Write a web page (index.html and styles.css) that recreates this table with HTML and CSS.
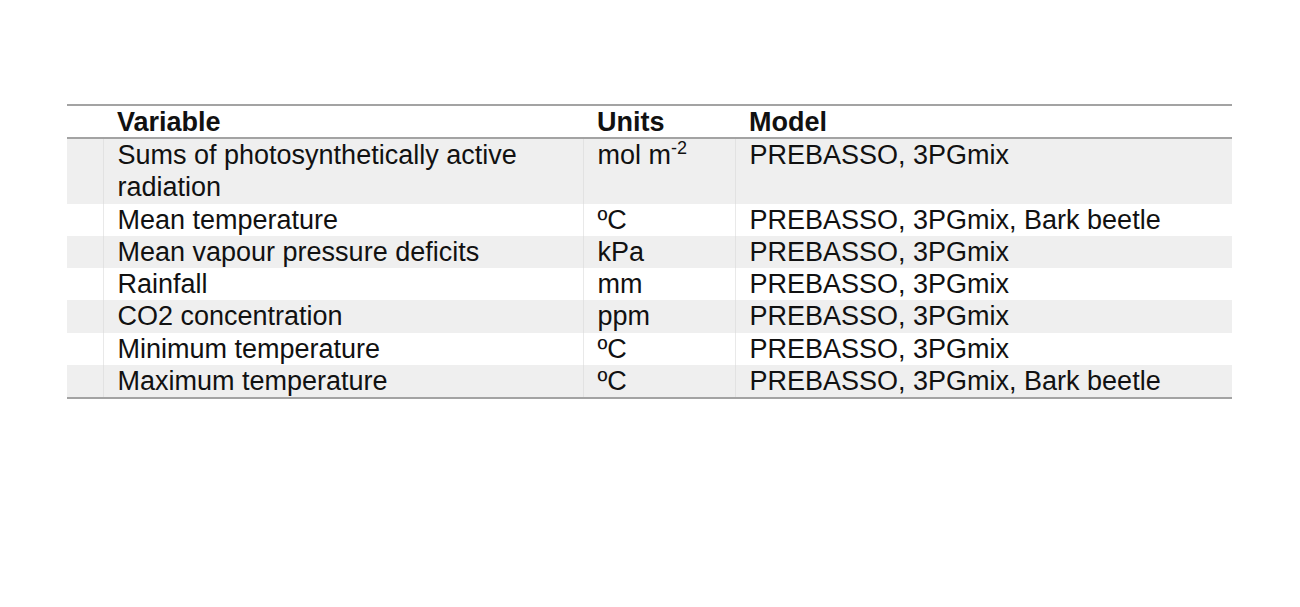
FILE: index.html
```html
<!DOCTYPE html>
<html>
<head>
<meta charset="utf-8">
<link rel="stylesheet" href="styles.css">
</head>
<body>
<div class="page">
<table class="vars">
  <colgroup>
    <col class="c0"><col class="c1"><col class="c2"><col class="c3">
  </colgroup>
  <thead>
    <tr class="head"><th class="blank"></th><th>Variable</th><th>Units</th><th>Model</th></tr>
  </thead>
  <tbody>
    <tr class="shade tall"><td class="blank"></td><td>Sums of photosynthetically active radiation</td><td>mol m<sup>-2</sup></td><td>PREBASSO, 3PGmix</td></tr>
    <tr><td class="blank"></td><td>Mean temperature</td><td>ºC</td><td>PREBASSO, 3PGmix, Bark beetle</td></tr>
    <tr class="shade"><td class="blank"></td><td>Mean vapour pressure deficits</td><td>kPa</td><td>PREBASSO, 3PGmix</td></tr>
    <tr><td class="blank"></td><td>Rainfall</td><td>mm</td><td>PREBASSO, 3PGmix</td></tr>
    <tr class="shade"><td class="blank"></td><td>CO2 concentration</td><td>ppm</td><td>PREBASSO, 3PGmix</td></tr>
    <tr><td class="blank"></td><td>Minimum temperature</td><td>ºC</td><td>PREBASSO, 3PGmix</td></tr>
    <tr class="shade"><td class="blank"></td><td>Maximum temperature</td><td>ºC</td><td>PREBASSO, 3PGmix, Bark beetle</td></tr>
  </tbody>
</table>
</div>
</body>
</html>
```
FILE: styles.css
```css
html, body {
  margin: 0;
  padding: 0;
  background: #ffffff;
}
.page {
  padding: 104px 0 0 67px;
  font-family: "Liberation Sans", Arial, sans-serif;
  color: #111111;
}
.vars {
  border-collapse: collapse;
  table-layout: fixed;
  width: 1165px;
  border-top: 2px solid #a3a3a3;
  border-bottom: 2px solid #a3a3a3;
  font-size: 27px;
}
.c0 { width: 36px; }
.c1 { width: 480px; }
.c2 { width: 152px; }
.c3 { width: 497px; }
.vars th, .vars td {
  padding: 0 0 0 14px;
  text-align: left;
  vertical-align: top;
  line-height: 32.25px;
  border-left: 1px solid #e9e9e9;
}
.vars th.blank, .vars td.blank {
  border-left: none;
  padding: 0;
}
.vars th {
  font-weight: bold;
  line-height: 29px;
  padding-top: 2px;
  border-left: none;
  border-bottom: 2px solid #a3a3a3;
}
.vars th.blank { padding: 0; }
.vars tr.shade { background: #efefef; }
.vars tr.shade td { border-left-color: #e2e2e2; }
.vars tr.shade td.blank { border-left: none; }
sup {
  font-size: 18px;
  line-height: 0;
  vertical-align: 10px;
}
```
